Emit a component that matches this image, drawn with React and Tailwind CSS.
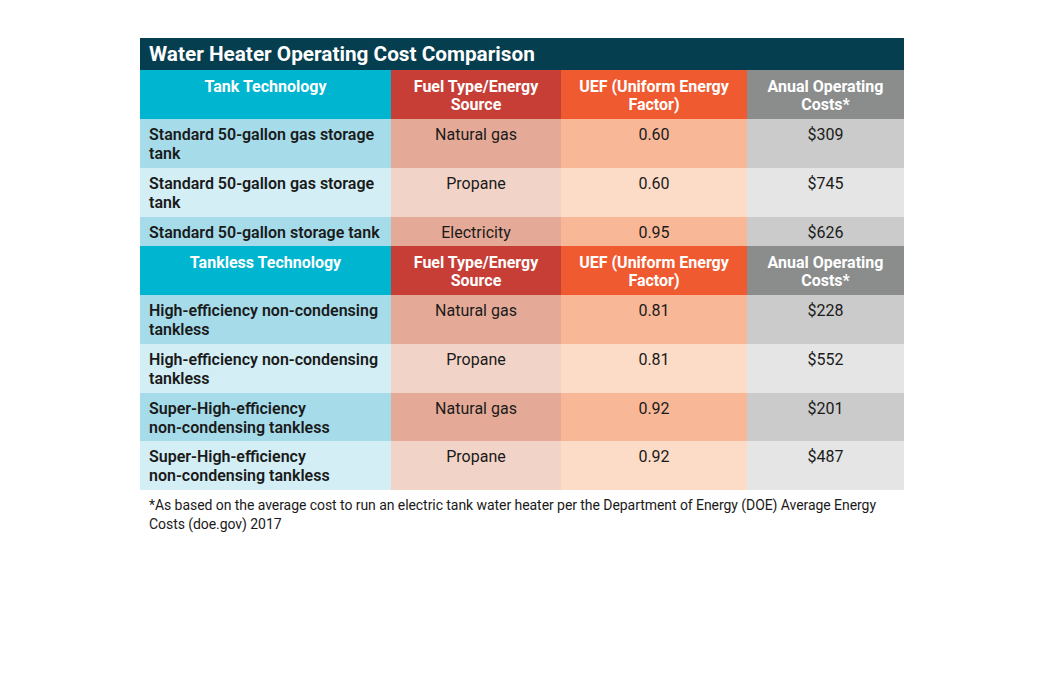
const cols = ['w-[251px]', 'w-[170px]', 'w-[186px]', 'w-[157px]'];

const headBg = ['bg-[#00b5cf]', 'bg-[#c73e36]', 'bg-[#ef5a30]', 'bg-[#8a8d8c]'];
const darkBg = ['bg-[#a6dcea]', 'bg-[#e5aa97]', 'bg-[#f8b898]', 'bg-[#cacbca]'];
const lightBg = ['bg-[#d3eef5]', 'bg-[#f2d3c7]', 'bg-[#fcdcc7]', 'bg-[#e4e5e4]'];

const tank = [
  [['Standard 50-gallon gas storage', 'tank'], 'Natural gas', '0.60', '$309', 'h-[49px]'],
  [['Standard 50-gallon gas storage', 'tank'], 'Propane', '0.60', '$745', 'h-[49px]'],
  [['Standard 50-gallon storage tank'], 'Electricity', '0.95', '$626', 'h-[29px]'],
];

const tankless = [
  [['High-efficiency non-condensing', 'tankless'], 'Natural gas', '0.81', '$228', 'h-[49px]'],
  [['High-efficiency non-condensing', 'tankless'], 'Propane', '0.81', '$552', 'h-[49px]'],
  [['Super-High-efficiency', 'non-condensing tankless'], 'Natural gas', '0.92', '$201', 'h-[48px]'],
  [['Super-High-efficiency', 'non-condensing tankless'], 'Propane', '0.92', '$487', 'h-[49px]'],
];

const HeaderRow = ({ label }) => (
  <div className="flex h-[49px] text-white font-bold text-[16px] leading-[18px] text-center">
    {[label, 'Fuel Type/Energy Source', 'UEF (Uniform Energy Factor)', 'Anual Operating Costs*'].map((t, i) => (
      <div key={i} className={`${cols[i]} ${headBg[i]} pt-[8px] px-[12px]`}>
        {t}
      </div>
    ))}
  </div>
);

const DataRow = ({ row, idx }) => {
  const bg = idx % 2 === 0 ? darkBg : lightBg;
  return (
    <div className={`flex ${row[4]} text-[16px] leading-[19px] text-[#1a1a1a]`}>
      <div className={`${cols[0]} ${bg[0]} pl-[9px] pt-[6px] font-semibold`}>
        {row[0].map((line, i) => (
          <div key={i} className="whitespace-nowrap">{line}</div>
        ))}
      </div>
      <div className={`${cols[1]} ${bg[1]} pt-[6px] text-center`}>{row[1]}</div>
      <div className={`${cols[2]} ${bg[2]} pt-[6px] text-center`}>{row[2]}</div>
      <div className={`${cols[3]} ${bg[3]} pt-[6px] text-center`}>{row[3]}</div>
    </div>
  );
};

export default function App() {
  return (
    <div className="w-[1044px] h-[684px] bg-white pt-[38px] pl-[140px]" style={{ fontFamily: 'Roboto, "Liberation Sans", sans-serif' }}>
      <div className="w-[764px]">
        <div className="h-[32px] bg-[#053e4f] text-white font-bold text-[20.75px] leading-[32px] pl-[9px]">
          Water Heater Operating Cost Comparison
        </div>
        <HeaderRow label="Tank Technology" />
        {tank.map((r, i) => <DataRow key={i} row={r} idx={i} />)}
        <HeaderRow label="Tankless Technology" />
        {tankless.map((r, i) => <DataRow key={i} row={r} idx={i} />)}
        <p className="pl-[9px] pt-[6px] text-[14px] leading-[19px] tracking-[-0.06px] text-[#1a1a1a] whitespace-nowrap">
          *As based on the average cost to run an electric tank water heater per the Department of Energy (DOE) Average Energy
          <br />
          Costs (doe.gov) 2017
        </p>
      </div>
    </div>
  );
}
